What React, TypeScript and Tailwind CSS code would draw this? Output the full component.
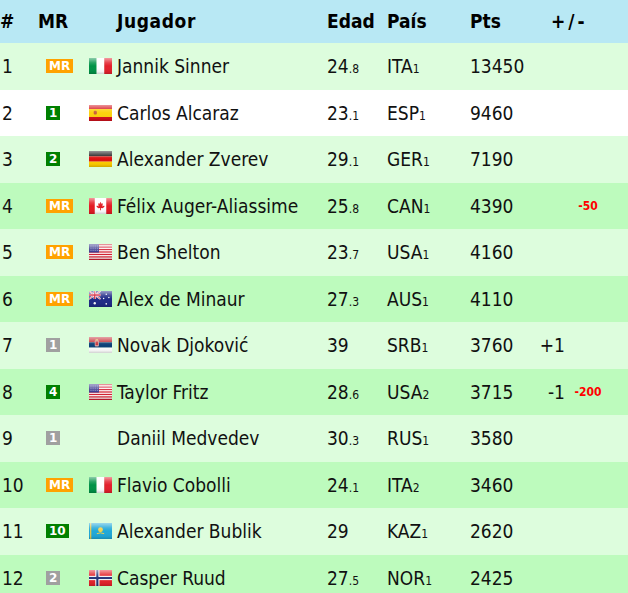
import React, { useId } from "react";

type Row = {
  n: number;
  mr: { t: string; c: "o" | "g" | "s" };
  flag: string | null;
  name: string;
  age: string;
  ageDec?: string;
  cc: string;
  ccn: string;
  pts: string;
  diff?: string;
  red?: string;
};

const rows: Row[] = [
  { n: 1, mr: { t: "MR", c: "o" }, flag: "ITA", name: "Jannik Sinner", age: "24", ageDec: ".8", cc: "ITA", ccn: "1", pts: "13450" },
  { n: 2, mr: { t: "1", c: "g" }, flag: "ESP", name: "Carlos Alcaraz", age: "23", ageDec: ".1", cc: "ESP", ccn: "1", pts: "9460" },
  { n: 3, mr: { t: "2", c: "g" }, flag: "GER", name: "Alexander Zverev", age: "29", ageDec: ".1", cc: "GER", ccn: "1", pts: "7190" },
  { n: 4, mr: { t: "MR", c: "o" }, flag: "CAN", name: "Félix Auger-Aliassime", age: "25", ageDec: ".8", cc: "CAN", ccn: "1", pts: "4390", red: "-50" },
  { n: 5, mr: { t: "MR", c: "o" }, flag: "USA", name: "Ben Shelton", age: "23", ageDec: ".7", cc: "USA", ccn: "1", pts: "4160" },
  { n: 6, mr: { t: "MR", c: "o" }, flag: "AUS", name: "Alex de Minaur", age: "27", ageDec: ".3", cc: "AUS", ccn: "1", pts: "4110" },
  { n: 7, mr: { t: "1", c: "s" }, flag: "SRB", name: "Novak Djoković", age: "39", cc: "SRB", ccn: "1", pts: "3760", diff: "+1" },
  { n: 8, mr: { t: "4", c: "g" }, flag: "USA", name: "Taylor Fritz", age: "28", ageDec: ".6", cc: "USA", ccn: "2", pts: "3715", diff: "-1", red: "-200" },
  { n: 9, mr: { t: "1", c: "s" }, flag: null, name: "Daniil Medvedev", age: "30", ageDec: ".3", cc: "RUS", ccn: "1", pts: "3580" },
  { n: 10, mr: { t: "MR", c: "o" }, flag: "ITA", name: "Flavio Cobolli", age: "24", ageDec: ".1", cc: "ITA", ccn: "2", pts: "3460" },
  { n: 11, mr: { t: "10", c: "g" }, flag: "KAZ", name: "Alexander Bublik", age: "29", cc: "KAZ", ccn: "1", pts: "2620" },
  { n: 12, mr: { t: "2", c: "s" }, flag: "NOR", name: "Casper Ruud", age: "27", ageDec: ".5", cc: "NOR", ccn: "1", pts: "2425" },
];

const rowBg = [
  "bg-[#ddfddd]",
  "bg-white",
  "bg-[#ddfddd]",
  "bg-[#bdfbbd]",
  "bg-[#ddfddd]",
  "bg-[#bdfbbd]",
  "bg-[#ddfddd]",
  "bg-[#bdfbbd]",
  "bg-[#ddfddd]",
  "bg-[#bdfbbd]",
  "bg-[#ddfddd]",
  "bg-[#bdfbbd]",
];

function FlagBody({ code }: { code: string }) {
  switch (code) {
    case "ITA":
      return (
        <>
          <rect x="0" y="0" width="7.4" height="15" fill="#009246" />
          <rect x="7.3" y="0" width="7.4" height="15" fill="#ffffff" />
          <rect x="14.6" y="0" width="7.4" height="15" fill="#e3202c" />
        </>
      );
    case "ESP":
      return (
        <>
          <rect width="22" height="15" fill="#d4111c" />
          <rect y="3.75" width="22" height="7.5" fill="#fcd20c" />
          <rect x="4.5" y="5.5" width="3" height="3.5" rx="1" fill="#c8603a" />
        </>
      );
    case "GER":
      return (
        <>
          <rect width="22" height="5" fill="#1a1a1a" />
          <rect y="5" width="22" height="5" fill="#dd1010" />
          <rect y="10" width="22" height="5" fill="#ffce00" />
        </>
      );
    case "CAN":
      return (
        <>
          <rect width="22" height="15" fill="#ffffff" />
          <rect width="5.5" height="15" fill="#e31b23" />
          <rect x="16.5" width="5.5" height="15" fill="#e31b23" />
          <path d="M11 3.5 L12 5.5 L13.3 5 L12.8 8 L14.5 7 L14.8 8.2 L13 9.6 L11.4 9.4 L11.4 11.5 L10.6 11.5 L10.6 9.4 L9 9.6 L7.2 8.2 L7.5 7 L9.2 8 L8.7 5 L10 5.5 Z" fill="#e31b23" />
        </>
      );
    case "USA":
      return (
        <>
          <rect width="22" height="15" fill="#ffffff" />
          {[0, 2, 4, 6, 8, 10, 12].map((i) => (
            <rect key={i} y={(i * 15) / 13} width="22" height={15 / 13} fill="#d21f30" />
          ))}
          <rect width="9.5" height="8" fill="#3c3b8e" />
          {[1.5, 3.5, 5.5].map((yy) =>
            [1.5, 3.5, 5.5, 7.5].map((xx) => (
              <rect key={`${xx}-${yy}`} x={xx} y={yy} width="0.8" height="0.8" fill="#c8c8f0" />
            ))
          )}
        </>
      );
    case "AUS":
      return (
        <>
          <rect width="22" height="15" fill="#1f2a86" />
          <path d="M0 0 L11 7.5 M11 0 L0 7.5" stroke="#ffffff" strokeWidth="1.5" />
          <path d="M0 0 L11 7.5 M11 0 L0 7.5" stroke="#d0102a" strokeWidth="0.6" />
          <path d="M5.5 0 V7.5 M0 3.75 H11" stroke="#ffffff" strokeWidth="2.2" />
          <path d="M5.5 0 V7.5 M0 3.75 H11" stroke="#d0102a" strokeWidth="1.2" />
          <circle cx="5.5" cy="11.5" r="1.1" fill="#ffffff" />
          <circle cx="16.5" cy="3" r="0.7" fill="#ffffff" />
          <circle cx="14" cy="7" r="0.7" fill="#ffffff" />
          <circle cx="19" cy="6" r="0.7" fill="#ffffff" />
          <circle cx="16.5" cy="12" r="0.8" fill="#ffffff" />
        </>
      );
    case "SRB":
      return (
        <>
          <rect width="22" height="5" fill="#c7363d" />
          <rect y="5" width="22" height="5" fill="#0c4077" />
          <rect y="10" width="22" height="5" fill="#ffffff" />
          <rect x="5.5" y="3" width="4" height="6" rx="1" fill="#d7a0a0" />
          <rect x="6.3" y="4.2" width="2.4" height="3.4" fill="#c7363d" />
          <rect x="6.3" y="2" width="2.4" height="1.3" fill="#e0b060" />
        </>
      );
    case "KAZ":
      return (
        <>
          <rect width="22" height="15" fill="#20a8d8" />
          <rect x="1" y="0" width="1.2" height="15" fill="#e8c84a" />
          <circle cx="11" cy="6.3" r="2.3" fill="#f2d24a" />
          <path d="M7.5 10 Q11 8.5 14.5 10" stroke="#f2d24a" strokeWidth="0.9" fill="none" />
        </>
      );
    case "NOR":
      return (
        <>
          <rect width="22" height="15" fill="#e3242b" />
          <rect x="6" width="4" height="15" fill="#ffffff" />
          <rect y="5.5" width="22" height="4" fill="#ffffff" />
          <rect x="7" width="2" height="15" fill="#27357a" />
          <rect y="6.5" width="22" height="2" fill="#27357a" />
        </>
      );
    default:
      return null;
  }
}

function Flag({ code }: { code: string }) {
  const id = useId().replace(/:/g, "");
  return (
    <svg width="23" height="16" viewBox="0 0 22 15" preserveAspectRatio="none" className="block">
      <defs>
        <linearGradient id={`gl${id}`} x1="0" y1="0" x2="0" y2="1">
          <stop offset="0" stopColor="#ffffff" stopOpacity="0.55" />
          <stop offset="0.3" stopColor="#ffffff" stopOpacity="0.15" />
          <stop offset="0.5" stopColor="#ffffff" stopOpacity="0" />
          <stop offset="0.85" stopColor="#000000" stopOpacity="0.05" />
          <stop offset="1" stopColor="#000000" stopOpacity="0.18" />
        </linearGradient>
      </defs>
      <FlagBody code={code} />
      <rect width="22" height="15" fill={`url(#gl${id})`} />
    </svg>
  );
}

function Badge({ t, c }: { t: string; c: "o" | "g" | "s" }) {
  const bg = c === "o" ? "bg-[#ffa200]" : c === "g" ? "bg-[#008000]" : "bg-[#a0a0a0]";
  return (
    <span
      className={`${bg} inline-flex h-[14px] min-w-[14px] items-center justify-center px-[3px] text-[12px] font-bold leading-none text-white`}
      style={{ fontFamily: '"DejaVu Sans", Verdana, sans-serif' }}
    >
      {t}
    </span>
  );
}

export default function App() {
  return (
    <div
      className="w-[628px] h-[593px] overflow-hidden bg-white text-[#111111]"
      style={{ fontFamily: '"DejaVu Sans Condensed", "DejaVu Sans", Tahoma, sans-serif' }}
    >
      <div className="flex h-[43px] items-center bg-[#b8e8f4] text-[19px] font-bold text-black">
        <div className="w-[38px]">#</div>
        <div className="w-[79px]">MR</div>
        <div className="w-[210px] tracking-[0.6px]">Jugador</div>
        <div className="w-[60px]">Edad</div>
        <div className="w-[83px]">País</div>
        <div className="w-[81px]">Pts</div>
        <div className="tracking-[3px]">+/-</div>
      </div>
      {rows.map((r, i) => (
        <div key={r.n} className={`flex h-[46.5px] items-center text-[19px] ${rowBg[i]}`}>
          <div className="w-[38px] pl-[2px]">{r.n}</div>
          <div className="w-[51px] pl-[8px] flex items-center">
            <Badge t={r.mr.t} c={r.mr.c} />
          </div>
          <div className="w-[28px] flex items-center">{r.flag ? <Flag code={r.flag} /> : null}</div>
          <div className="w-[210px] whitespace-nowrap">{r.name}</div>
          <div className="w-[60px]">
            {r.age}
            {r.ageDec ? <span className="text-[12px]">{r.ageDec}</span> : null}
          </div>
          <div className="w-[83px]">
            {r.cc}
            <span className="text-[12px]">{r.ccn}</span>
          </div>
          <div className="w-[60px]">{r.pts}</div>
          <div className="w-[35px] text-right">{r.diff ?? ""}</div>
          <div className="w-[46px] text-center text-[12px] font-bold text-[#ff0000]">{r.red ?? ""}</div>
        </div>
      ))}
    </div>
  );
}
